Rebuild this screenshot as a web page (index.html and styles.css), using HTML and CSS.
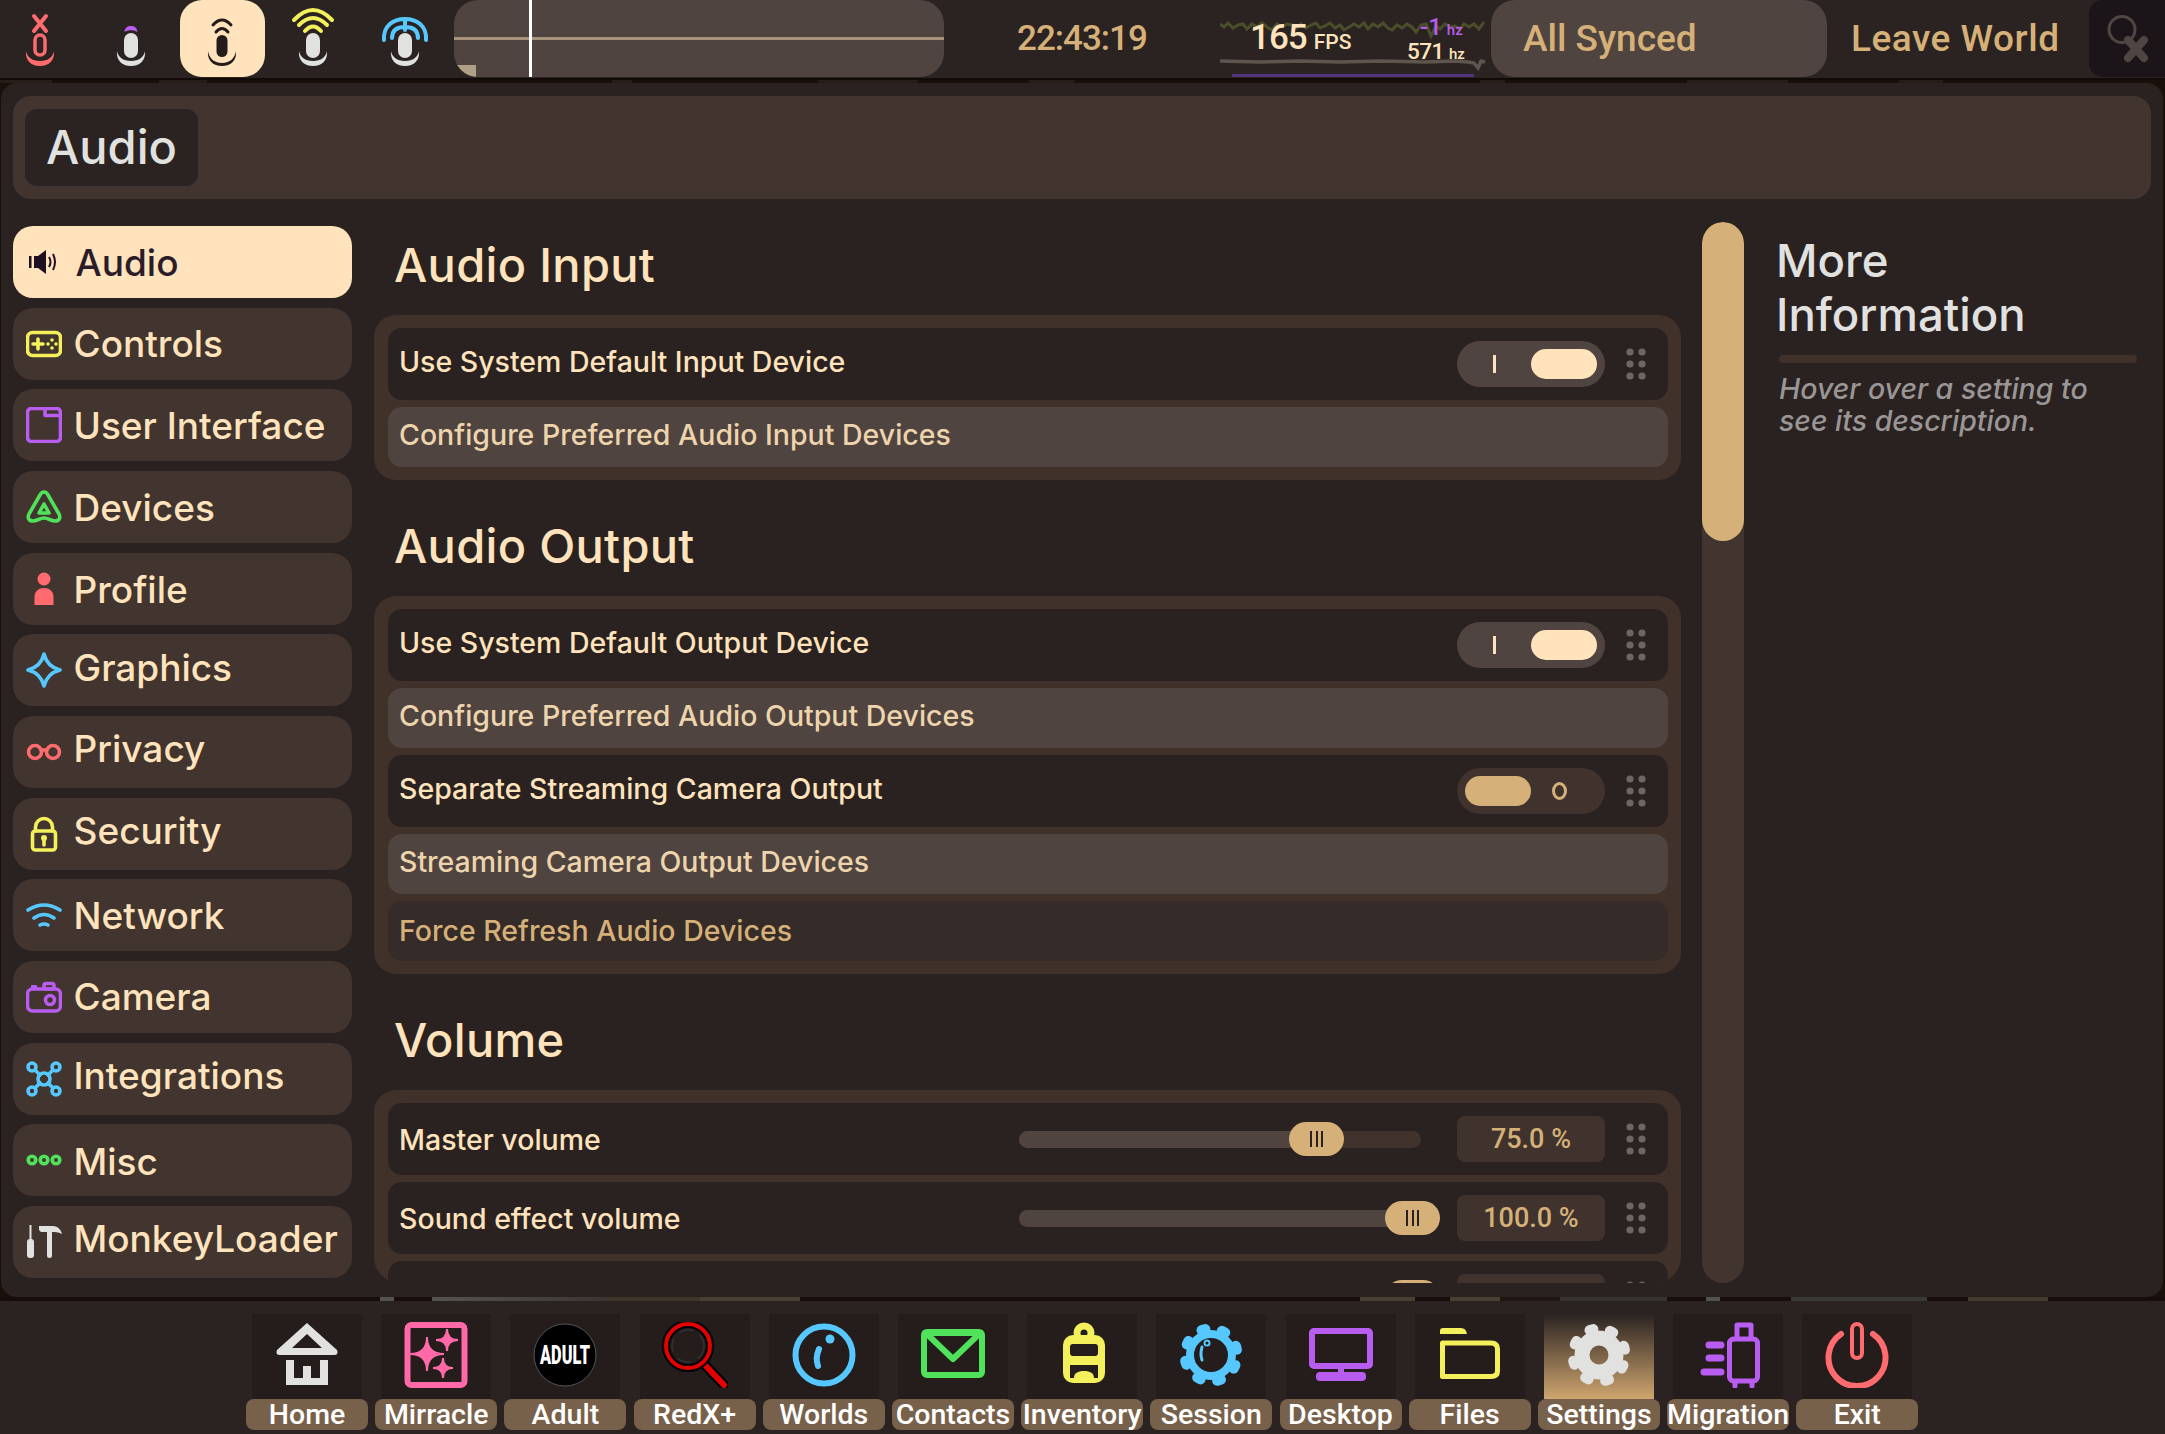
FILE: index.html
```html
<!DOCTYPE html>
<html lang="en">
<head>
<meta charset="utf-8">
<title>Audio settings</title>
<link rel="stylesheet" href="styles.css">
</head>
<body>
<header class="topbar">
  <div class="mics">
    <div class="mic mic-first"><svg width="60" height="78" viewBox="0 0 60 78"><path class="red-s" d="M24 16l12 15M36 16L24 31" stroke-width="4"/><rect class="red-s" x="25" y="35" width="10" height="20" rx="5" stroke-width="3.500"/><path class="red" d="M16 51C15 60 21 66 30 66C39 66 45 60 44 51C43 57 38 61 30 61C22 61 17 57 16 51Z"/></svg></div>
    <div class="mic"><svg width="60" height="78" viewBox="0 0 60 78"><path class="purple" d="M23.500 32C24 27 27 26 30 26C33 26 36 27 36.500 32C33 29.500 27 29.500 23.500 32Z"/><rect class="gray" x="23" y="33" width="14" height="25" rx="7"/><path class="gray" d="M16 51C15 60 21 66 30 66C39 66 45 60 44 51C43 57 38 61 30 61C22 61 17 57 16 51Z"/></svg></div>
    <div class="mic mic-on"><svg width="60" height="78" viewBox="0 0 60 78"><path class="dark-s" d="M21 25Q30 15 39 25M24 32Q30 25 36 32" stroke-width="3"/><rect class="dark" x="24.500" y="35" width="11" height="22" rx="5.500"/><path class="dark" d="M16 51C15 60 21 66 30 66C39 66 45 60 44 51C43 58 38 63 30 63C22 63 17 58 16 51Z"/></svg></div>
    <div class="mic"><svg width="60" height="78" viewBox="0 0 60 78"><path class="yellow-s" d="M11 20Q30 0 49 20M16 25Q30 11 44 25M22 31Q30 22 38 31" stroke-width="4"/><rect class="gray" x="23" y="33" width="14" height="25" rx="7"/><path class="gray" d="M16 51C15 60 21 66 30 66C39 66 45 60 44 51C43 57 38 61 30 61C22 61 17 57 16 51Z"/></svg></div>
    <div class="mic"><svg width="60" height="78" viewBox="0 0 60 78"><path class="blue-s" d="M9 40C8 26 18 19 30 19C42 19 52 26 51 40M17 38C17 30 22 27 30 27C38 27 43 30 43 38M30 19V30" stroke-width="4"/><rect class="gray" x="23" y="33" width="14" height="25" rx="7"/><path class="gray" d="M16 51C15 60 21 66 30 66C39 66 45 60 44 51C43 57 38 61 30 61C22 61 17 57 16 51Z"/></svg></div>
  </div>
  <div class="wave"><i class="wave-line"></i><i class="wave-cursor"></i><i class="wave-corner"></i></div>
  <div class="clock">22:43:19</div>
  <div class="fps">
    <svg class="fps-graph" width="267" height="78" viewBox="0 0 267 78"><polyline class="graph-green" points="0,24 4,27 8,23 13,28 18,25 23,24 27,29 32,24 37,27 42,23 47,27 52,30 57,24 62,27 67,24 72,25 76,28 81,24 86,28 91,25 96,23 100,28 105,26 110,23 115,28 120,25 124,30 129,27 134,24 139,27 144,23 148,29 153,24 158,27 163,23 168,28 172,30 177,25 182,28 187,24 192,27 196,32 201,25 206,24 211,36 216,26 220,29 225,24 230,27 235,26 240,29 244,24 249,27 254,24 259,29 264,22"/><polyline class="graph-gray" points="0,61 40,62 80,61 120,62 160,61 205,62 235,61 248,62 254,63 258,68 261,61 265,62"/><rect class="graph-purple" x="12" y="74" width="242" height="3"/></svg>
    <div class="fps-main">165<small>FPS</small></div>
    <div class="fps-delta">-1<small>hz</small></div>
    <div class="fps-rate">571<small>hz</small></div>
  </div>
  <div class="synced">All Synced</div>
  <div class="leave">Leave World</div>
  <div class="closer"><svg width="52" height="62" viewBox="0 0 52 62"><circle cx="21" cy="21.500" r="13" class="muted-s" stroke-width="3"/><path class="muted-s" d="M27 32L43 50M43 32L27 50" stroke-width="8"/></svg></div>
</header>
<div class="strip strip-top"></div>

<main class="panel">
  <div class="title-bar"><h1 class="title-chip">Audio</h1></div>
  <div class="panel-body">
    <nav class="sidebar">
      <a class="nav-item nav-active"><svg width="36" height="36" viewBox="0 0 36 36"><path fill="#1f0f22" d="M3 12h2.500v12H3zM8 12h4l8-6v24l-8-6H8z"/><path d="M23 13Q26 18 23 23M27 10Q31 18 27 26" fill="none" stroke="#1f0f22" stroke-width="2"/></svg><span class="nav-audio">Audio</span></a>
      <a class="nav-item"><svg width="36" height="36" viewBox="0 0 36 36"><rect class="yellow-s" x="1.500" y="6.500" width="33" height="23" rx="5" stroke-width="3"/><path class="yellow-s" d="M7 18h10M12 13v10" stroke-width="3"/><circle class="yellow" cx="22" cy="18" r="1.800"/><circle class="yellow" cx="26" cy="14" r="1.800"/><circle class="yellow" cx="26" cy="22" r="1.800"/><circle class="yellow" cx="30" cy="18" r="1.800"/></svg><span>Controls</span></a>
      <a class="nav-item"><svg width="36" height="36" viewBox="0 0 36 36"><rect class="purple-s" x="1.500" y="1.500" width="33" height="33" rx="4" stroke-width="3"/><path class="purple-s" d="M19 2v6.500h15" stroke-width="3"/></svg><span>User Interface</span></a>
      <a class="nav-item"><svg width="36" height="36" viewBox="0 0 36 36"><path class="green-s" d="M18 3C20 3 21 4 22 6L33 25C35 29 33 32 29 32C25 32 22 29 18 29C14 29 11 32 7 32C3 32 1 29 3 25L14 6C15 4 16 3 18 3Z" stroke-width="3"/><path class="green-s" d="M18 15L23 24H13Z" stroke-width="3"/></svg><span class="drop">Devices</span></a>
      <a class="nav-item"><svg width="36" height="36" viewBox="0 0 36 36"><circle class="red" cx="18" cy="8" r="6.500"/><path class="red" d="M8.500 34V26C8.500 20 13 17 18 17C23 17 27.500 20 27.500 26V34Z"/></svg><span class="drop">Profile</span></a>
      <a class="nav-item"><svg width="36" height="36" viewBox="0 0 36 36"><path class="blue-s" d="M18 2C20 10 26 16 34 18C26 20 20 26 18 34C16 26 10 20 2 18C10 16 16 10 18 2Z" stroke-width="3"/></svg><span class="lift">Graphics</span></a>
      <a class="nav-item"><svg width="36" height="36" viewBox="0 0 36 36"><circle class="red-s" cx="9" cy="18" r="6.500" stroke-width="3.500"/><circle class="red-s" cx="27" cy="18" r="6.500" stroke-width="3.500"/><path class="red-s" d="M15 16h6" stroke-width="3"/></svg><span class="lift">Privacy</span></a>
      <a class="nav-item"><svg width="36" height="36" viewBox="0 0 36 36"><rect class="yellow-s" x="6.500" y="15" width="23" height="19" rx="3" stroke-width="3"/><path class="yellow-s" d="M9.500 15V11a8.500 8.500 0 0 1 17 0V15" stroke-width="3"/><circle class="yellow" cx="18" cy="22" r="3"/><path class="yellow-s" d="M18 23v6" stroke-width="3"/></svg><span class="lift">Security</span></a>
      <a class="nav-item"><svg width="36" height="36" viewBox="0 0 36 36"><path class="blue-s" d="M2 13Q18 3 34 13M8 21Q18 14 28 21M14 28Q18 26 22 28" stroke-width="3"/></svg><span>Network</span></a>
      <a class="nav-item"><svg width="36" height="36" viewBox="0 0 36 36"><rect class="purple-s" x="1.500" y="10" width="33" height="22" rx="5" stroke-width="3"/><rect class="purple" x="5" y="6" width="6" height="5" rx="1"/><rect class="purple-s" x="18" y="4.500" width="10" height="5.500" rx="2" stroke-width="3"/><circle class="purple-s" cx="24" cy="21" r="4.500" stroke-width="3"/></svg><span>Camera</span></a>
      <a class="nav-item"><svg width="36" height="36" viewBox="0 0 36 36"><circle class="blue-s" cx="6" cy="6" r="4" stroke-width="3"/><circle class="blue-s" cx="30" cy="6" r="4" stroke-width="3"/><circle class="blue-s" cx="6" cy="30" r="4" stroke-width="3"/><circle class="blue-s" cx="30" cy="30" r="4" stroke-width="3"/><circle class="blue-s" cx="18" cy="18" r="6" stroke-width="3"/><path class="blue-s" d="M9 9l5 5M27 9l-5 5M9 27l5-5M27 27l-5-5" stroke-width="3"/></svg><span class="lift">Integrations</span></a>
      <a class="nav-item"><svg width="36" height="36" viewBox="0 0 36 36"><circle class="green-s" cx="6" cy="18" r="3.800" stroke-width="3"/><circle class="green-s" cx="18" cy="18" r="3.800" stroke-width="3"/><circle class="green-s" cx="30" cy="18" r="3.800" stroke-width="3"/></svg><span class="drop">Misc</span></a>
      <a class="nav-item"><svg width="36" height="36" viewBox="0 0 36 36"><path class="gray" d="M3.500 1h2v15h-2z"/><rect class="gray" x="1" y="15" width="7" height="19" rx="3"/><path class="gray" d="M13 2H27C32 2 35 6 36 10C32 8 29 8 26 8V32Q26 34 23.500 34Q21 34 21 32V8H15L13 6Z"/></svg><span class="lift">MonkeyLoader</span></a>
    </nav>

    <section class="content">
      <h2 class="section-title">Audio Input</h2>
      <div class="group">
        <div class="row"><span class="row-label">Use System Default Input Device</span><div class="toggle"><i class="tick"></i><i class="knob"></i></div><svg class="grip" width="20" height="32" viewBox="0 0 20 32"><use href="#dots"/></svg></div>
        <div class="action">Configure Preferred Audio Input Devices</div>
      </div>
      <h2 class="section-title section-next">Audio Output</h2>
      <div class="group">
        <div class="row"><span class="row-label">Use System Default Output Device</span><div class="toggle"><i class="tick"></i><i class="knob"></i></div><svg class="grip" width="20" height="32" viewBox="0 0 20 32"><use href="#dots"/></svg></div>
        <div class="action">Configure Preferred Audio Output Devices</div>
        <div class="row"><span class="row-label">Separate Streaming Camera Output</span><div class="toggle toggle-off"><i class="knob"></i><i class="ring"></i></div><svg class="grip" width="20" height="32" viewBox="0 0 20 32"><use href="#dots"/></svg></div>
        <div class="action">Streaming Camera Output Devices</div>
        <div class="action action-dim">Force Refresh Audio Devices</div>
      </div>
      <h2 class="section-title section-next">Volume</h2>
      <div class="group">
        <div class="row"><span class="row-label row-flush">Master volume</span><div class="slider"><i class="slider-fill" style="width:74%"></i><i class="thumb" style="left:270px"><b></b></i></div><div class="value">75.0 %</div><svg class="grip" width="20" height="32" viewBox="0 0 20 32"><use href="#dots"/></svg></div>
        <div class="row"><span class="row-label row-flush">Sound effect volume</span><div class="slider"><i class="slider-fill" style="width:98%"></i><i class="thumb" style="left:366px"><b></b></i></div><div class="value">100.0 %</div><svg class="grip" width="20" height="32" viewBox="0 0 20 32"><use href="#dots"/></svg></div>
        <div class="row"><span class="row-label row-flush"></span><div class="slider"><i class="slider-fill" style="width:98%"></i><i class="thumb" style="left:366px"><b></b></i></div><div class="value"></div><svg class="grip" width="20" height="32" viewBox="0 0 20 32"><use href="#dots"/></svg></div>
      </div>
    </section>

    <div class="scrollbar"><i class="scroll-thumb"></i></div>

    <aside class="info">
      <h2 class="info-title">More Information</h2>
      <div class="info-rule"></div>
      <p class="info-text">Hover over a setting to see its description.</p>
    </aside>
  </div>
</main>
<div class="strip strip-bottom"></div>

<footer class="dock">
  <div class="dock-item"><div class="dock-icon"><svg width="66" height="66" viewBox="0 0 66 66"><path class="gray" fill-rule="evenodd" d="M33 1L63 28Q65 33 60 33H6Q1 33 3 28ZM33 12L18 26H48Z"/><path class="gray" d="M12 38H20V56H29V44H37V56H46V38H54V63H12Z"/></svg></div><span class="dock-label">Home</span></div>
  <div class="dock-item"><div class="dock-icon"><svg width="66" height="66" viewBox="0 0 66 66"><rect x="4.500" y="3" width="57" height="60" rx="4" fill="none" stroke="#ff69a8" stroke-width="6"/><path fill="#ff69a8" d="M24 15Q24 32 41 32Q24 32 24 49Q24 32 7 32Q24 32 24 15ZM44 7Q44 18 55 18Q44 18 44 29Q44 18 33 18Q44 18 44 7ZM40 36Q40 46 50 46Q40 46 40 56Q40 46 30 46Q40 46 40 36Z" stroke="#ff69a8" stroke-width="2"/></svg></div><span class="dock-label">Mirracle</span></div>
  <div class="dock-item"><div class="dock-icon"><svg width="66" height="66" viewBox="0 0 66 66"><circle cx="33" cy="33" r="31" fill="#000" stroke="#555" stroke-width="1"/><text class="adult-text" x="33" y="42" text-anchor="middle" textLength="50" lengthAdjust="spacingAndGlyphs">ADULT</text></svg></div><span class="dock-label">Adult</span></div>
  <div class="dock-item"><div class="dock-icon"><svg width="66" height="66" viewBox="0 0 66 66"><path d="M42 42L62 63" stroke="#000" stroke-width="10" stroke-linecap="round"/><path d="M42 42L62 63" stroke="#e60000" stroke-width="6" stroke-linecap="round"/><circle cx="26" cy="24" r="22" fill="none" stroke="#000" stroke-width="8"/><circle cx="26" cy="24" r="22" fill="none" stroke="#e60000" stroke-width="4"/><circle cx="26" cy="24" r="16" fill="none" stroke="#333" stroke-width="1.500" stroke-dasharray="14 8"/></svg></div><span class="dock-label">RedX+</span></div>
  <div class="dock-item"><div class="dock-icon"><svg width="66" height="66" viewBox="0 0 66 66"><circle class="blue-s" cx="33" cy="33" r="28.500" stroke-width="6"/><circle class="blue" cx="39" cy="17" r="4.500"/><path class="blue-s" d="M28 27Q24 36 27 44" stroke-width="6"/></svg></div><span class="dock-label">Worlds</span></div>
  <div class="dock-item"><div class="dock-icon"><svg width="66" height="66" viewBox="0 0 66 66"><rect class="green-s" x="4" y="10" width="58" height="43" rx="3" stroke-width="6"/><path class="green" d="M3 8H63V14H3Z"/><path class="green-s" d="M9 14L33 37L57 14" stroke-width="6"/></svg></div><span class="dock-label">Contacts</span></div>
  <div class="dock-item"><div class="dock-icon"><svg width="66" height="66" viewBox="0 0 66 66"><circle class="yellow-s" cx="35" cy="11" r="7" stroke-width="7"/><rect class="yellow" x="14" y="13" width="42" height="48" rx="10"/><rect class="hole" x="21" y="22" width="28" height="12" rx="3"/><path class="hole" d="M21 43H49V56H45C45 51 41 49 35 49C29 49 25 51 25 56H21Z"/></svg></div><span class="dock-label">Inventory</span></div>
  <div class="dock-item"><div class="dock-icon"><svg width="66" height="66" viewBox="0 0 66 66"><g transform="rotate(22.500 33 33)"><circle class="blue-s" cx="33" cy="33" r="26.500" stroke-width="10" stroke-dasharray="4 16.810"/></g><circle class="blue-s" cx="33" cy="33" r="21" stroke-width="8"/><path class="blue-s" d="M24 25Q22 32 24 38" stroke-width="3"/><circle class="blue-s" cx="29" cy="21" r="2.500" stroke-width="2"/></svg></div><span class="dock-label">Session</span></div>
  <div class="dock-item"><div class="dock-icon"><svg width="66" height="66" viewBox="0 0 66 66"><rect class="purple-s" x="4" y="9" width="58" height="35" rx="2" stroke-width="6"/><path class="purple-s" d="M33 44V52" stroke-width="6"/><rect class="purple" x="8" y="50" width="50" height="9" rx="4"/></svg></div><span class="dock-label">Desktop</span></div>
  <div class="dock-item"><div class="dock-icon"><svg width="66" height="66" viewBox="0 0 66 66"><path class="yellow" d="M3 9Q3 6 6 6H24Q29 6 30 12H3Z"/><path class="yellow-s" d="M5.500 21H54Q60.500 21 60.500 27V49Q60.500 54.500 54 54.500H5.500Z" stroke-width="5"/></svg></div><span class="dock-label">Files</span></div>
  <div class="dock-item dock-active"><div class="dock-icon"><svg width="66" height="66" viewBox="0 0 66 66"><g transform="rotate(22.500 33 33)"><circle class="gray-s" cx="33" cy="33" r="26.500" stroke-width="10" stroke-dasharray="4 16.810"/></g><circle class="gray-s" cx="33" cy="33" r="17" stroke-width="15"/></svg></div><span class="dock-label">Settings</span></div>
  <div class="dock-item"><div class="dock-icon"><svg width="66" height="66" viewBox="0 0 66 66"><rect class="purple-s" x="34.500" y="17" width="28" height="42" rx="4" stroke-width="5"/><path class="purple-s" d="M42 16V3H56V16" stroke-width="5"/><path class="purple-s" d="M40 60v4M57 60v4" stroke-width="5"/><path class="purple-s" d="M14 23H26M14 36H26M9 50H26" stroke-width="7"/></svg></div><span class="dock-label">Migration</span></div>
  <div class="dock-item"><div class="dock-icon"><svg width="66" height="66" viewBox="0 0 66 66"><path class="red-s" d="M17 12A28.500 28.500 0 1 0 49 12" stroke-width="6"/><rect class="red-s" x="28" y="2" width="10" height="34" rx="5" stroke-width="4"/></svg></div><span class="dock-label">Exit</span></div>
</footer>

<svg class="defs" width="0" height="0"><defs><g id="dots" fill="#6b6765"><circle cx="4" cy="4" r="3.600"/><circle cx="16" cy="4" r="3.600"/><circle cx="4" cy="16" r="3.600"/><circle cx="16" cy="16" r="3.600"/><circle cx="4" cy="28" r="3.600"/><circle cx="16" cy="28" r="3.600"/></g></defs></svg>
</body>
</html>
```

FILE: styles.css
```css
* { box-sizing: border-box; }
html, body { margin: 0; padding: 0; }
body {
  width: 2165px;
  height: 1434px;
  overflow: hidden;
  background: #1a100b;
  font-family: "Inter", "Noto Sans", sans-serif;
  font-weight: 500;
  display: flex;
  flex-direction: column;
}
svg { display: block; flex: none; }
.defs { position: absolute; }
i { display: block; font-style: normal; }

.red { fill: #ff6b6e; } .red-s { fill: none; stroke: #ff6b6e; stroke-linecap: round; stroke-linejoin: round; }
.gray { fill: #e1e1e0; } .gray-s { fill: none; stroke: #e1e1e0; stroke-linecap: round; }
.purple { fill: #b95cf0; } .purple-s { fill: none; stroke: #b95cf0; stroke-linecap: round; stroke-linejoin: round; }
.yellow { fill: #f4f05c; } .yellow-s { fill: none; stroke: #f4f05c; stroke-linecap: round; stroke-linejoin: round; }
.blue { fill: #56c8ff; } .blue-s { fill: none; stroke: #56c8ff; stroke-linecap: round; stroke-linejoin: round; }
.green { fill: #50e25a; } .green-s { fill: none; stroke: #50e25a; stroke-linecap: round; stroke-linejoin: round; }
.dark { fill: #241c1a; } .dark-s { fill: none; stroke: #241c1a; stroke-linecap: round; }
.muted-s { fill: none; stroke: #4f4644; stroke-linecap: round; }
.hole { fill: #241d1b; }

/* top bar */
.topbar {
  flex: none;
  height: 78px;
  background: #2a2321;
  display: flex;
  box-shadow: 0 2px 0 #120a07;
  position: relative;
  font-family: "Roboto", "Inter", sans-serif;
}
.strip { flex: none; }
.strip-top {
  height: 5px;
  background: linear-gradient(90deg,
    #261d18 0, #261d18 52px, #1a100b 52px, #1a100b 159px, #261d18 159px, #261d18 207px, #1a100b 207px,
    #1a100b 612px, #261d18 612px, #261d18 632px, #1a100b 632px, #1a100b 818px, #261d18 818px, #261d18 918px, #1a100b 918px,
    #1a100b 1029px, #261d18 1029px, #261d18 1074px, #1a100b 1074px, #1a100b 1480px, #261d18 1480px, #261d18 1505px, #1a100b 1505px,
    #1a100b 1687px, #261d18 1687px, #261d18 1788px, #1a100b 1788px, #1a100b 1899px, #261d18 1899px, #261d18 1943px, #1a100b 1943px);
}
.strip-bottom {
  height: 4px;
  background: linear-gradient(90deg,
    #170d0a 0, #170d0a 380px, #55534f 380px, #55534f 394px, #170d0a 394px, #170d0a 432px, #55534f 432px, #3a3532 608px, #3f352b 608px, #3f352b 700px, #4a3f33 700px, #4a3f33 800px, #170d0a 800px,
    #170d0a 1360px, #4a3f33 1360px, #4a3f33 1415px, #170d0a 1415px, #170d0a 1450px, #4a3f33 1450px, #4a3f33 1500px, #1f1612 1500px, #1f1612 1560px, #353230 1560px, #353230 1667px, #170d0a 1667px,
    #170d0a 1706px, #55534f 1706px, #55534f 1720px, #170d0a 1720px, #170d0a 1791px, #3a3a34 1791px, #3a3a34 1927px, #170d0a 1927px, #170d0a 1968px, #443a2e 1968px, #443a2e 2048px, #170d0a 2048px);
}
.mics { display: flex; gap: 6.300px; width: 454px; flex: none; }
.mic { width: 85px; height: 77px; flex: none; display: flex; align-items: center; justify-content: center; border-radius: 22px; }
.mic-first { margin-left: -3px; }
.mic-on { background: #ffe3bd; }
.wave { position: relative; width: 490px; height: 77px; flex: none; background: #4f4440; border-radius: 24px; overflow: hidden; }
.wave-line { position: absolute; left: 0; right: 0; top: 37px; height: 3px; background: #a8947d; }
.wave-cursor { position: absolute; left: 75px; top: 0; bottom: 0; width: 3px; background: #fff; }
.wave-corner { position: absolute; left: 0; bottom: 0; width: 22px; height: 12px; background: #b0a088; }
.clock { flex: none; width: 129px; margin-left: 73px; line-height: 77px; font-size: 35px; letter-spacing: -1px; color: #d5b078; white-space: nowrap; }
.fps { position: relative; flex: none; width: 267px; height: 78px; margin-left: 74px; color: #ffe3bd; }
.fps-graph { position: absolute; left: 0; top: 0; }
.graph-green { fill: none; stroke: #4a4e2a; stroke-width: 3; }
.graph-gray { fill: none; stroke: #5f554f; stroke-width: 3.500; }
.graph-purple { fill: #53347a; }
.fps-main { position: absolute; left: 30px; top: 16px; font-size: 35px; line-height: 44px; letter-spacing: -1px; white-space: nowrap; }
.fps-main small { font-size: 21px; margin-left: 7px; letter-spacing: 0; }
.fps-delta { position: absolute; left: 200px; top: 12px; font-size: 24px; line-height: 30px; color: #b95cf0; white-space: nowrap; }
.fps-rate { position: absolute; left: 187px; top: 36px; font-size: 22.500px; line-height: 30px; letter-spacing: -0.500px; white-space: nowrap; }
.fps-delta small, .fps-rate small { font-size: 15px; margin-left: 5px; letter-spacing: 0; }
.synced { flex: none; width: 336px; height: 77px; margin-left: 4px; padding-left: 32px; line-height: 77px; border-radius: 24px; background: #4f4440; color: #d5b078; font-size: 37px; }
.leave { flex: none; width: 208px; margin-left: 24px; line-height: 77px; color: #d5b078; font-size: 37px; letter-spacing: 0.500px; white-space: nowrap; }
.closer { flex: none; width: 76px; height: 77px; margin-left: 30px; background: #1b1418; border-radius: 14px 0 0 14px; display: flex; align-items: center; justify-content: center; }

/* panel */
.panel {
  flex: none;
  height: 1214px;
  margin: 0 2px 0 1px;
  padding: 13px 12px 14px 12px;
  background: #2a2220;
  border-radius: 16px;
  display: flex;
  flex-direction: column;
}
.title-bar { flex: none; height: 103px; padding: 13px 12px; background: #42342e; border-radius: 18px; }
.title-chip { display: inline-block; margin: 0; height: 77px; padding: 0 21px; line-height: 75px; border-radius: 12px; background: #2a2321; color: #e1e1e0; font-size: 47px; font-weight: 500; }
.panel-body { flex: none; height: 1061px; margin-top: 23px; display: flex; }

/* sidebar */
.sidebar { flex: none; width: 339px; margin-right: 22px; padding-top: 4px; display: flex; flex-direction: column; gap: 9.670px; }
.nav-item { flex: none; height: 72px; padding-left: 13px; display: flex; align-items: center; gap: 11.500px; background: #42342e; border-radius: 20px; color: #ffe3bd; font-size: 37px; white-space: nowrap; }
.nav-item:not(.nav-active) svg [class$="-s"] { stroke-width: 3.600px; }
.nav-active { background: #ffe3bd; color: #2a1c28; }
.nav-audio { margin-left: 2px; }
.lift { padding-bottom: 6px; }
.drop { padding-top: 2px; }

/* content */
.content { flex: none; width: 1307px; height: 1061px; overflow: hidden; border-radius: 0 0 26px 26px; }
.section-title { margin: 0; height: 93px; padding: 13px 0 0 20px; line-height: 60px; font-size: 47px; letter-spacing: 0.300px; font-weight: 500; color: #ffe3bd; }
.section-next { margin-top: 23px; }
.group { padding: 13px 13px 13px 14px; background: #40322b; border-radius: 22px; display: flex; flex-direction: column; gap: 7px; }
.row { flex: none; height: 72px; padding: 0 22px 0 11px; display: flex; align-items: center; background: #2a2220; border-radius: 14px; color: #ffe3bd; font-size: 28.500px; }
.row-label { flex: 1; padding-bottom: 5px; white-space: nowrap; }
.row-flush { padding-bottom: 0; }
.action { flex: none; height: 60px; padding: 0 0 5px 11px; line-height: 55px; background: #4f4440; border-radius: 14px; color: #eed4ac; font-size: 28.500px; }
.action-dim { padding-bottom: 0; line-height: 60px; background: #352b28; color: #d5b078; }
.toggle { flex: none; width: 148px; height: 46px; margin-right: 21px; position: relative; display: flex; align-items: center; justify-content: space-between; padding: 0 8px 0 36px; background: #4f4440; border-radius: 23px; }
.tick { width: 3px; height: 18px; background: #ffe3bd; }
.knob { width: 66px; height: 30px; background: #ffe3bd; border-radius: 15px; }
.toggle-off { background: #40332d; padding: 0 0 0 8px; justify-content: flex-start; }
.toggle-off .knob { background: #d5b078; }
.ring { width: 15px; height: 18px; margin-left: 21px; border: 3px solid #d5b078; border-radius: 50%; }
.grip { flex: none; }
.slider { flex: none; position: relative; width: 402px; height: 17px; margin-right: 36px; background: #40332d; border-radius: 9px; }
.slider-fill { height: 17px; background: #4f4440; border-radius: 9px; }
.thumb { position: absolute; top: -9px; width: 55px; height: 34px; background: #d5b078; border-radius: 20px; display: flex; align-items: center; justify-content: center; }
.thumb b { display: block; width: 13px; height: 16px; border-left: 2px solid #2a2220; border-right: 2px solid #2a2220; background: linear-gradient(#2a2220, #2a2220) center / 2px 100% no-repeat; }
.value { flex: none; width: 148px; height: 46px; margin-right: 21px; line-height: 46px; text-align: center; background: #40332d; border-radius: 8px; color: #d5b078; font-family: "Roboto", "Inter", sans-serif; font-size: 27px; }

/* scrollbar */
.scrollbar { flex: none; width: 42px; height: 1061px; margin-left: 21px; background: #42342e; border-radius: 21px; overflow: hidden; }
.scroll-thumb { height: 319px; background: #d5b078; border-radius: 21px; }

/* info */
.info { flex: none; width: 361px; margin-left: 32px; padding-top: 12px; }
.info-title { margin: 0 0 13px; line-height: 54px; font-size: 45.500px; font-weight: 500; color: #e1e1e0; }
.info-rule { width: 358px; height: 8px; margin-left: 3px; background: #40322b; border-radius: 4px; }
.info-text { width: 358px; margin: 10px 0 0 3px; line-height: 32px; font-size: 28.500px; font-style: italic; color: #9a9695; }

/* dock */
.dock { flex: none; height: 133px; padding: 13px 0 0 246px; background: #2a2321; display: flex; gap: 7.200px; font-family: "Roboto", "Inter", sans-serif; }
.dock-item { flex: none; width: 122px; display: flex; flex-direction: column; align-items: center; }
.dock-icon { width: 110px; height: 85px; padding-bottom: 3px; background: #241d1b; display: flex; align-items: center; justify-content: center; }
.dock-active .dock-icon { background: linear-gradient(rgba(207, 166, 111, 0), #cfa66f); }
.dock-label { width: 122px; height: 31px; line-height: 31px; text-align: center; background: #78614a; border-radius: 8px; color: #fff; font-size: 28.500px; white-space: nowrap; }
.adult-text { fill: #fff; font-family: "Roboto", sans-serif; font-weight: 900; font-size: 26px; }
```
